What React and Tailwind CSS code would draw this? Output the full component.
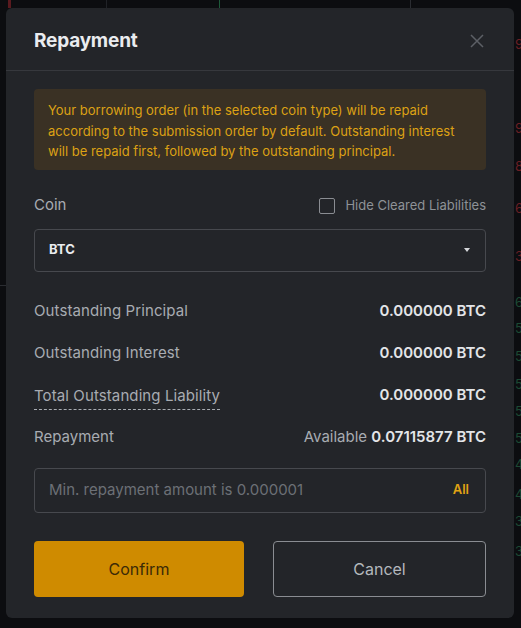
import { useState } from 'react';

const SIDE_DIGITS = [
    { y: 38, c: 'text-[#6b1f24]', t: '9' },
    { y: 122, c: 'text-[#6b1f24]', t: '9' },
    { y: 160, c: 'text-[#6b1f24]', t: '8' },
    { y: 202, c: 'text-[#6b1f24]', t: '6' },
    { y: 250, c: 'text-[#6b1f24]', t: '3' },
    { y: 296, c: 'text-[#1d4a34]', t: '6' },
    { y: 322, c: 'text-[#1d4a34]', t: '5' },
    { y: 350, c: 'text-[#1d4a34]', t: '5' },
    { y: 378, c: 'text-[#1d4a34]', t: '5' },
    { y: 405, c: 'text-[#1d4a34]', t: '5' },
    { y: 432, c: 'text-[#1d4a34]', t: '5' },
    { y: 458, c: 'text-[#1d4a34]', t: '4' },
    { y: 488, c: 'text-[#1d4a34]', t: '4' },
    { y: 515, c: 'text-[#1d4a34]', t: '3' },
    { y: 545, c: 'text-[#1d4a34]', t: '3' },
];

function StatRow({ label, value, dashed }) {
    return (
        <div className="flex items-center justify-between h-5">
            <span className={`text-[#a8acb2] tracking-[0.1px] ${dashed ? 'border-b border-dashed border-[#a8acb2] pb-[2px] mt-[4px]' : ''}`}>
                {label}
            </span>
            <span className="font-semibold text-[#e3e5e8]">{value}</span>
        </div>
    );
}

export default function App() {
    const [hideCleared, setHideCleared] = useState(false);
    const [amount, setAmount] = useState('');

    return (
        <div
            className="relative w-[521px] h-[628px] overflow-hidden bg-[#0c0d10] text-[15px]"
            style={{ fontFamily: 'Inter, "Noto Sans", sans-serif' }}
        >
            {/* chart behind the overlay */}
            <div className="absolute left-[106px] top-0 h-[8px] w-px bg-[#202227]" />
            <div className="absolute left-[219px] top-0 h-[8px] w-px bg-[#1e5a3a]" />
            <div className="absolute left-[410px] top-0 h-[8px] w-px bg-[#2a2c31]" />
            <div className="absolute left-[8px] top-0 h-[8px] w-[3px] bg-[#5a1a1f]" />
            <div className="absolute left-0 top-[285px] h-px w-[6px] bg-[#2a2c31]" />
            {SIDE_DIGITS.map((d, i) => (
                <span
                    key={i}
                    className={`absolute left-[515px] text-[13px] leading-none ${d.c}`}
                    style={{ top: d.y }}
                >
                    {d.t}
                </span>
            ))}

            <div className="relative ml-[6px] mt-[8px] w-[508px] h-[610px] rounded-[6px] bg-[#232529] flex flex-col">
                <div className="h-[63px] pt-[5px] px-[28px] flex items-center justify-between border-b border-[#36383d]">
                    <h2 className="text-[19px] font-bold text-[#eaecef] tracking-[-0.2px]">Repayment</h2>
                    <button type="button" className="text-[#5d6066] mr-[1px] -mt-[2px]" aria-label="Close">
                        <svg width="16" height="16" viewBox="0 0 16 16" fill="none" stroke="currentColor" strokeWidth="1.5">
                            <path d="M2 2L14 14M14 2L2 14" />
                        </svg>
                    </button>
                </div>

                <div className="px-[28px] pt-[18px] flex flex-col">
                    <div className="rounded-[4px] bg-[#3a3124] px-[14px] pt-[11px] pb-[8px] text-[13px] leading-[20.5px] text-[#dda114]">
                        Your borrowing order (in the selected coin type) will be repaid according to the submission order by default. Outstanding interest will be repaid first, followed by the outstanding principal.
                    </div>

                    <div className="mt-[26px] h-5 flex items-center justify-between">
                        <span className="text-[#a8acb2]">Coin</span>
                        <label className="flex items-center gap-[10px] text-[13px] text-[#8e9297] cursor-pointer">
                            <span
                                className="w-[16px] h-[16px] rounded-[2px] border border-[#8a8d92]"
                                onClick={() => setHideCleared(!hideCleared)}
                            />
                            Hide Cleared Liabilities
                        </label>
                    </div>

                    <div className="mt-[13px] h-[43px] rounded-[4px] border border-[#47494e] px-[14px] flex items-center justify-between">
                        <span className="text-[13px] font-bold text-[#eaecef]">BTC</span>
                        <svg width="6" height="4" viewBox="0 0 6 4" className="mr-[1px]">
                            <path d="M0 0H6L3 4Z" fill="#d5d7da" />
                        </svg>
                    </div>

                    <div className="mt-[30px] flex flex-col gap-[22px]">
                        <StatRow label="Outstanding Principal" value="0.000000 BTC" />
                        <StatRow label="Outstanding Interest" value="0.000000 BTC" />
                        <StatRow label="Total Outstanding Liability" value="0.000000 BTC" dashed />
                        <div className="flex items-center justify-between h-5">
                            <span className="text-[#a8acb2]">Repayment</span>
                            <span className="text-[#a8acb2]">
                                Available <span className="font-semibold text-[#e3e5e8]">0.07115877 BTC</span>
                            </span>
                        </div>
                    </div>

                    <div className="mt-[20px] h-[45px] rounded-[4px] border border-[#47494e] pl-[14px] pr-[16px] flex items-center">
                        <input
                            value={amount}
                            onChange={(e) => setAmount(e.target.value)}
                            placeholder="Min. repayment amount is 0.000001"
                            className="flex-1 bg-transparent outline-none text-[#eaecef] placeholder:text-[#6c7076]"
                        />
                        <button type="button" className="text-[13px] font-semibold text-[#e0a313]">All</button>
                    </div>

                    <div className="mt-[28px] grid grid-cols-[210px_1fr] gap-[29px]">
                        <button type="button" className="h-[56px] rounded-[4px] bg-[#cf8b00] text-[#3b2a07] text-[16px]">
                            Confirm
                        </button>
                        <button type="button" className="h-[56px] rounded-[4px] border border-[#8a8d92] text-[#b4b8bd] text-[16px]">
                            Cancel
                        </button>
                    </div>
                </div>
            </div>
        </div>
    );
}
